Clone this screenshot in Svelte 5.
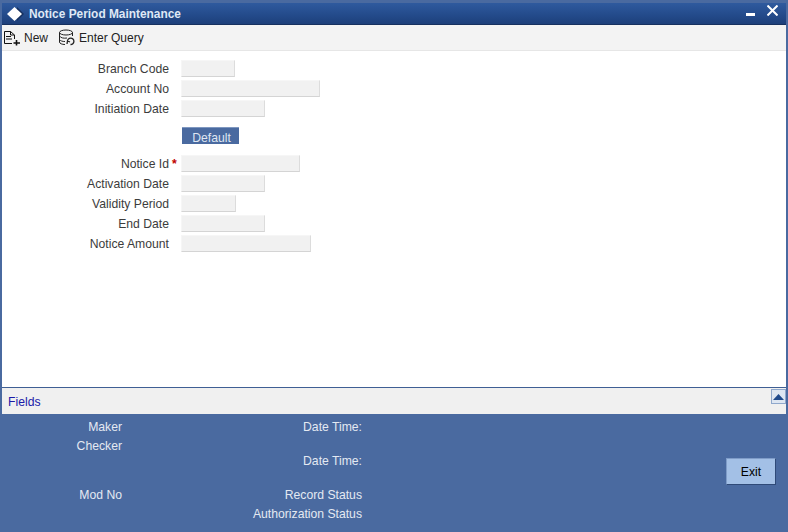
<script lang="ts">
  const topFields = [
    { label: "Branch Code", width: 54 },
    { label: "Account No", width: 139 },
    { label: "Initiation Date", width: 84 },
  ];
  const bottomFields = [
    { label: "Notice Id", width: 119, required: true },
    { label: "Activation Date", width: 84 },
    { label: "Validity Period", width: 55 },
    { label: "End Date", width: 84 },
    { label: "Notice Amount", width: 130 },
  ];
</script>

{#snippet field(f: { label: string; width: number; required?: boolean })}
  <div class="row">
    <label class="label" for={f.label}>{f.label}</label>
    <span class="req">{f.required ? "*" : ""}</span>
    <input id={f.label} type="text" style="width: {f.width}px" />
  </div>
{/snippet}

<div class="window">
  <header class="titlebar">
    <svg class="logo" width="19" height="16" viewBox="0 0 19 16">
      <path d="M11 1 L18 8 L11 15 Z" fill="#16305f" />
      <path d="M8.5 1 L16 8 L8.5 15 L1 8 Z" fill="#fff" />
    </svg>
    <h1>Notice Period Maintenance</h1>
    <div class="controls">
      <svg width="9" height="3" viewBox="0 0 9 3"><rect width="9" height="3" fill="#fff" /></svg>
      <svg width="11" height="11" viewBox="0 0 11 11"><path d="M0.5 0.5 L10.5 10.5 M10.5 0.5 L0.5 10.5" stroke="#fff" stroke-width="2" /></svg>
    </div>
  </header>

  <div class="toolbar">
    <button class="tool">
      <svg width="18" height="16" viewBox="0 0 18 16" fill="none" stroke="#111" stroke-width="1">
        <path d="M1.5 13.5 V1.5 H7.5 L11.5 5 V9 M7.5 1.5 V5 H11.5 M3 6.5 H8 M3 9 H9 M1.5 13.5 H9" />
        <path d="M13.5 10 V15.5 M10.5 13 H17" stroke-width="1.6" />
      </svg>
      New
    </button>
    <button class="tool">
      <svg width="18" height="17" viewBox="0 0 18 17" fill="none" stroke="#222" stroke-width="1">
        <ellipse cx="8" cy="3.5" rx="6.5" ry="2.5" />
        <path d="M1.5 3.5 V13 C1.5 14.5 4 15.5 7 15.5 M14.5 3.5 V7 M1.5 7 C2.5 9 6 9.5 9 9 M1.5 10.5 C2.5 12 4.5 12.5 7 12.5" />
        <path d="M9.5 12.5 A3.2 3.2 0 1 1 12.5 15.5 M9 15 L9.5 12 L12 13" stroke-width="1.3" />
      </svg>
      Enter Query
    </button>
  </div>

  <main class="form">
    <div class="group">
      {#each topFields as f}
        {@render field(f)}
      {/each}
    </div>
    <button class="default">Default</button>
    <div class="group">
      {#each bottomFields as f}
        {@render field(f)}
      {/each}
    </div>
  </main>

  <div class="fields-bar">
    <span class="fields-link">Fields</span>
    <button class="collapse" aria-label="Collapse">
      <svg width="11" height="6" viewBox="0 0 11 6"><path d="M5.5 0 L11 6 H0 Z" fill="#1f4a8c" /></svg>
    </button>
  </div>

  <footer class="audit">
    <div class="col col-left">
      <span class="a1">Maker</span>
      <span class="a2">Checker</span>
      <span class="a3">Mod No</span>
    </div>
    <div class="col col-mid">
      <span class="b1">Date Time:</span>
      <span class="b2">Date Time:</span>
      <span class="b3">Record Status</span>
      <span class="b4">Authorization Status</span>
    </div>
    <button class="exit">Exit</button>
  </footer>
</div>

<style>
  :global(body) {
    margin: 0;
    background: #4a6aa0;
  }
  .window {
    box-sizing: border-box;
    width: 788px;
    height: 532px;
    display: flex;
    flex-direction: column;
    padding: 3px 2px 2px 2px;
    background: #4a6aa0;
    font-family: "Liberation Sans", Arial, sans-serif;
    font-size: 12.2px;
    color: #333;
  }
  .titlebar {
    box-sizing: border-box;
    height: 22px;
    flex: none;
    display: flex;
    align-items: center;
    padding: 0 8px 0 4px;
    background: linear-gradient(#2f5a9e, #234a8a 60%, #1d3f7a);
    border-bottom: 1px solid #16305f;
  }
  .logo {
    margin-right: 4px;
  }
  h1 {
    margin: 0;
    flex: 1;
    font-size: 11.9px;
    font-weight: bold;
    color: #dfe8f5;
  }
  .controls {
    display: flex;
    align-items: flex-start;
    gap: 12px;
    margin-top: -7px;
  }
  .controls svg:first-child {
    margin-top: 8px;
  }
  .toolbar {
    box-sizing: border-box;
    height: 26px;
    flex: none;
    display: flex;
    align-items: center;
    gap: 10px;
    padding-left: 1px;
    background: #f3f3f3;
    border-bottom: 1px solid #e6e6e6;
    font-size: 12px;
  }
  .tool {
    display: flex;
    align-items: center;
    gap: 3px;
    padding: 0;
    border: none;
    background: none;
    font: inherit;
    color: #222;
  }
  .form {
    flex: 1;
    background: #fff;
    padding-top: 9px;
    min-height: 0;
  }
  .group {
    display: flex;
    flex-direction: column;
    gap: 3px;
  }
  .row {
    display: flex;
    align-items: center;
    height: 17px;
  }
  .label {
    box-sizing: border-box;
    width: 167px;
    text-align: right;
    color: #3c3c3c;
  }
  .req {
    width: 12px;
    padding-left: 3px;
    box-sizing: border-box;
    color: #c00000;
    font-weight: bold;
  }
  input {
    box-sizing: border-box;
    height: 17px;
    padding: 0;
    background: #f1f1f1;
    border: none;
    border-right: 1px solid #dcdcdc;
    border-bottom: 1px solid #d4d4d4;
    border-top: 1px solid #f6f6f6;
    border-left: 1px solid #f6f6f6;
  }
  .default {
    display: block;
    box-sizing: border-box;
    width: 57px;
    height: 17px;
    margin: 10px 0 11px 180px;
    padding: 3px 0 0 2px;
    border: none;
    border-top: 1px solid #7e97c0;
    background: #4a6aa0;
    color: #dfe6f2;
    font: inherit;
  }
  .fields-bar {
    height: 26px;
    flex: none;
    display: flex;
    justify-content: space-between;
    padding-left: 6px;
    background: #f0f0f0;
    border-top: 1px solid #3f5f94;
  }
  .fields-link {
    align-self: center;
    padding-top: 2px;
    color: #1a1aa8;
  }
  .collapse {
    box-sizing: border-box;
    width: 15px;
    height: 15px;
    margin-top: 1px;
    padding: 0;
    border: 1px solid #8fa8cc;
    background: #dde6f2;
    display: flex;
    align-items: center;
    justify-content: center;
  }
  .audit {
    height: 116px;
    flex: none;
    position: relative;
    display: flex;
    background: #4a6aa0;
    color: #e4e9f2;
  }
  .col {
    display: flex;
    flex-direction: column;
    align-items: flex-end;
    padding-top: 6px;
  }
  .col span {
    line-height: 14px;
  }
  .col-left {
    width: 120px;
  }
  .col-mid {
    width: 240px;
  }
  .a2 {
    margin-top: 5px;
  }
  .a3 {
    margin-top: 35px;
  }
  .b2 {
    margin-top: 20px;
  }
  .b3 {
    margin-top: 20px;
  }
  .b4 {
    margin-top: 5px;
  }
  .exit {
    position: absolute;
    right: 10px;
    top: 44px;
    width: 50px;
    height: 27px;
    padding: 0;
    background: #a3c0e6;
    border: 1px solid #7f9cc8;
    border-right-color: #2f4a78;
    border-bottom-color: #2f4a78;
    color: #000;
    font: inherit;
  }
</style>
